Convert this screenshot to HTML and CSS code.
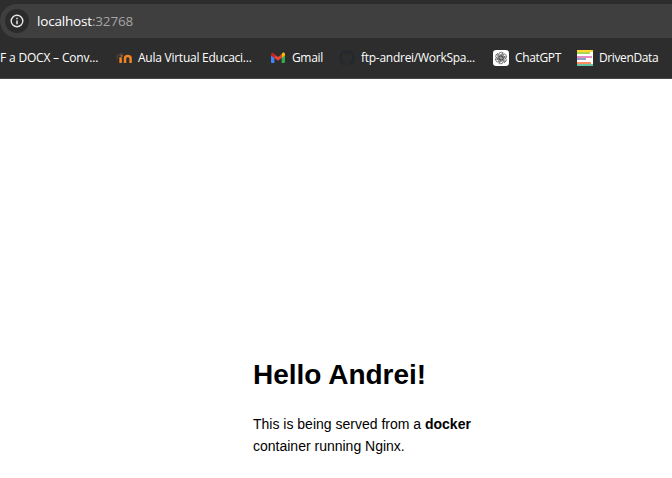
FILE: index.html
```html
<!DOCTYPE html>
<html lang="es">
<head>
<meta charset="utf-8">
<title>localhost:32768</title>
<link rel="stylesheet" href="styles.css">
</head>
<body>
<header class="browser">
  <div class="address">
    <span class="info"><svg width="14" height="14" viewBox="0 0 14 14"><circle cx="7" cy="7" r="5.8" fill="none" stroke="#e6e6e6" stroke-width="1.4"/><path d="M7 6.4v3.8M7 3.7v1.5" stroke="#e6e6e6" stroke-width="1.5"/></svg></span>
    <span class="url">localhost<span class="port">:32768</span></span>
  </div>
  <nav class="bookmarks">
    <a class="bookmark docx"><span class="label">F a DOCX – Conv...</span></a>
    <a class="bookmark aula">
      <svg width="16" height="16" viewBox="0 0 16 16"><path d="M.5 5.2 5 3.2l3 .3L5 5.7Z" fill="#51463f"/><path d="M1.2 5.2v4" stroke="#554b43"/><path d="M4.6 13V7.2M9 13V8.4Q9 6 11.8 6T14.6 8.4V13" fill="none" stroke="#f08424" stroke-width="2.5"/><path d="M4.6 5.9h2.2" stroke="#a86028" stroke-width="1.8"/></svg>
      <span class="label">Aula Virtual Educaci...</span>
    </a>
    <a class="bookmark gmail">
      <svg width="16" height="16" viewBox="0 0 16 16"><path d="M1 5v7.2q0 .8.9.8h2.5V7.2Z" fill="#4285f4"/><path d="M15 5v7.2q0 .8-.9.8h-2.5V7.2Z" fill="#34a853"/><path d="M11.6 4.2V8L15 5.4V4.2c0-1.6-1.6-2-2.6-1.2Z" fill="#fbbc04"/><path d="M4.4 8V4.2L8 6.9l3.6-2.7V8L8 10.7Z" fill="#ea4335"/><path d="M1 4.2v1.2L4.4 8V4.2L3.6 3C2.6 2.2 1 2.8 1 4.2Z" fill="#c5221f"/></svg>
      <span class="label">Gmail</span>
    </a>
    <a class="bookmark github">
      <svg width="16" height="16" viewBox="0 0 16 16"><path fill="#24292e" d="M8 0C3.58 0 0 3.58 0 8c0 3.54 2.29 6.53 5.47 7.59.4.07.55-.17.55-.38 0-.19-.01-.82-.01-1.49-2.01.37-2.53-.49-2.69-.94-.09-.23-.48-.94-.82-1.13-.28-.15-.68-.52-.01-.53.63-.01 1.08.58 1.23.82.72 1.21 1.87.87 2.33.66.07-.52.28-.87.51-1.07-1.78-.2-3.64-.89-3.64-3.95 0-.87.31-1.59.82-2.15-.08-.2-.36-1.02.08-2.12 0 0 .67-.21 2.2.82.64-.18 1.32-.27 2-.27s1.36.09 2 .27c1.53-1.04 2.2-.82 2.2-.82.44 1.1.16 1.92.08 2.12.51.56.82 1.27.82 2.15 0 3.07-1.87 3.75-3.65 3.95.29.25.54.73.54 1.48 0 1.07-.01 1.93-.01 2.2 0 .21.15.46.55.38A8.01 8.01 0 0 0 16 8c0-4.42-3.58-8-8-8Z"/></svg>
      <span class="label">ftp-andrei/WorkSpa...</span>
    </a>
    <a class="bookmark chatgpt">
      <svg width="16" height="16" viewBox="0 0 16 16"><rect width="16" height="16" rx="3.2" fill="#fff"/><g fill="none" stroke="#333" stroke-width=".65"><path id="petal" d="M5.9 9.2V4.6Q5.9 2.2 8.2 2.2 9.5 2.2 10.3 3.1L6.9 5.1V8.6"/><use href="#petal" transform="rotate(60 8 8)"/><use href="#petal" transform="rotate(120 8 8)"/><use href="#petal" transform="rotate(180 8 8)"/><use href="#petal" transform="rotate(240 8 8)"/><use href="#petal" transform="rotate(300 8 8)"/></g></svg>
      <span class="label">ChatGPT</span>
    </a>
    <a class="bookmark driven">
      <svg width="16" height="16" viewBox="0 0 16 16" shape-rendering="crispEdges"><path fill="#fff" d="M0 0h16v16H0z"/><path fill="#ffd92f" d="M0 0h16v2H0z"/><path fill="#a6d854" d="M0 2h13v2H0z"/><path fill="#e78ac3" d="M0 6h15v2H0z"/><path fill="#8da0cb" d="M0 8h9v2H0z"/><path fill="#fc8d62" d="M0 12h14v2H0z"/><path fill="#66c2a5" d="M0 14h16v2H0z"/></svg>
      <span class="label">DrivenData</span>
    </a>
  </nav>
</header>
<main class="page">
  <h1>Hello Andrei!</h1>
  <p>This is being served from a <b>docker</b><br>container running Nginx.</p>
</main>
</body>
</html>
```
FILE: styles.css
```css
* { box-sizing: border-box; }
body { margin: 0; width: 672px; height: 478px; overflow: hidden; background: #fff; }
.browser {
  height: 79px;
  padding-top: 4px;
  background: #2d2d2d;
  border-bottom: 1px solid #4b4848;
  font-family: "Open Sans", "Noto Sans", sans-serif;
  color: #fff;
}
.address {
  height: 34px;
  display: flex;
  align-items: center;
  gap: 8px;
  padding-left: 5px;
  background: #3f3f3f;
  border-radius: 17px 0 0 17px;
}
.info {
  width: 24px;
  height: 24px;
  border-radius: 50%;
  background: #2b2b2b;
  display: grid;
  place-items: center;
}
.url { font-size: 13.5px; line-height: 20px; letter-spacing: -0.18px; }
.port { color: #a5a5a5; }
.bookmarks { display: flex; height: 40px; align-items: center; }
.bookmark { display: flex; flex: none; align-items: center; gap: 6px; }
.bookmark svg { flex: none; display: block; }
.label { font-size: 12px; line-height: 16px; white-space: nowrap; }
.docx { width: 116px; letter-spacing: -0.18px; }
.aula { width: 154px; letter-spacing: -0.25px; }
.gmail { width: 69px; letter-spacing: -0.35px; }
.github { width: 154px; letter-spacing: -0.27px; }
.chatgpt { width: 84px; letter-spacing: -0.35px; }
.driven { letter-spacing: -0.38px; }
.page {
  padding: 280px 0 0 253px;
  font-family: "Liberation Sans", Arial, sans-serif;
  color: #000;
}
h1 { margin: 0; font-size: 28px; line-height: 32px; }
p { margin: 22px 0 0; font-size: 14px; line-height: 22px; }
```
